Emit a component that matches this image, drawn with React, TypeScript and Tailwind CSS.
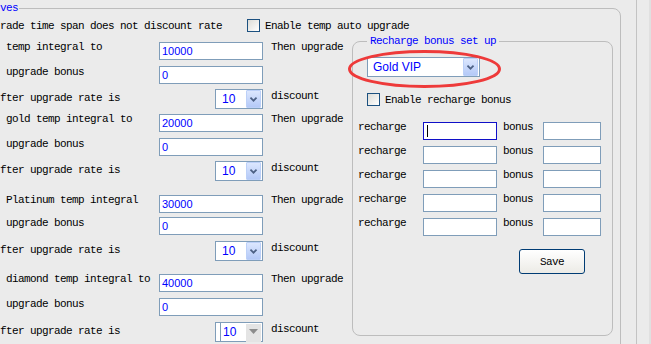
import React from 'react'

const txt =
  "font-['Liberation_Mono',monospace] text-[11px] leading-[12px] tracking-[-0.6px] text-black whitespace-pre"
const legendTxt =
  "font-['Liberation_Mono',monospace] text-[11px] tracking-[-0.6px] text-[#0000ff] whitespace-pre"

function Checkbox() {
  return (
    <div className="h-[13px] w-[13px] shrink-0 border border-[#1c5180] bg-linear-to-br from-[#dcdcd7] to-white" />
  )
}

function TextBox({
  value = '',
  className = '',
  focus = false,
}: {
  value?: string
  className?: string
  focus?: boolean
}) {
  return (
    <div
      className={`flex h-[18px] shrink-0 items-center bg-white pl-[2px] font-['Liberation_Sans',sans-serif] text-[11px] leading-[16px] text-[#0000ff] ${
        focus ? 'border border-[#1010c8]' : 'border border-[#7f9db9]'
      } ${className}`}
    >
      {focus && <span className="ml-[1px] h-[12px] w-[1px] bg-black" />}
      {value}
    </div>
  )
}

function Chevron() {
  return (
    <svg width="15" height="18" viewBox="0 0 15 18">
      <polyline
        points="4,7.5 7.5,11 11,7.5"
        fill="none"
        stroke="#4d6185"
        strokeWidth="2"
      />
    </svg>
  )
}

function Combo({ value, className = '', textClass = '' }: { value: string; className?: string; textClass?: string }) {
  return (
    <div
      className={`flex h-[20px] shrink-0 items-center justify-between border border-[#7f9db9] bg-white pr-[1px] font-['Liberation_Sans',sans-serif] text-[12px] text-[#0000ff] ${className}`}
    >
      <span className={textClass}>{value}</span>
      <div className="flex h-[18px] w-[15px] items-center justify-center rounded-[1px] border border-[#bcd0f8] bg-linear-to-b from-[#dce7fe] to-[#b4c9f7]">
        <Chevron />
      </div>
    </div>
  )
}

function DisabledCombo() {
  return (
    <div className="flex h-[20px] w-[48px] shrink-0 border border-[#7f9db9] bg-white pl-[4px] pr-[1px] font-['Liberation_Sans',sans-serif] text-[12px] text-[#0000ff]">
      <div className="flex flex-1 items-center border-l border-[#7f9db9] pl-[2px]">10</div>
      <div className="mt-[1px] flex h-[18px] w-[15px] items-start justify-center bg-[#e4e4e4] pt-[5px]">
        <svg width="9" height="6" viewBox="0 0 9 6">
          <polygon points="0,0 9,0 4.5,5" fill="#8c8c8c" />
        </svg>
      </div>
    </div>
  )
}

const groups = [
  { label: ' temp integral to', value: '10000', m: ['mt-[7px]', 'mt-[6px]', 'mt-[5px]'] },
  { label: ' gold temp integral to', value: '20000', m: ['mt-[5px]', 'mt-[6px]', 'mt-[5px]'] },
  { label: ' Platinum temp integral', value: '30000', m: ['mt-[14px]', 'mt-[4px]', 'mt-[6px]'] },
  { label: ' diamond temp integral to', value: '40000', m: ['mt-[13px]', 'mt-[6px]', 'mt-[6px]'] },
]

export default function App() {
  return (
    <div className="relative flex h-[344px] w-[651px] overflow-hidden bg-[#ebebeb]">
      <div className="h-full w-[636px] shrink-0">
        <fieldset className="ml-[-20px] h-[420px] w-[641px] min-w-0 rounded-tr-[8px] border border-[#bdbdbd] pl-[19px]">
          <legend className={`${legendTxt} pr-[1px] leading-[16px]`}>ves</legend>

          <div className="flex h-[19px] items-center">
            <span className={`${txt} w-[247px]`}>rade time span does not discount rate</span>
            <Checkbox />
            <span className={`${txt} ml-[5px]`}>Enable temp auto upgrade</span>
          </div>

          <div className="flex items-start">
            <div className="flex w-[352px] shrink-0 flex-col">
              {groups.map((g, i) => (
                <React.Fragment key={g.value}>
                  <div className={`flex h-[18px] ${g.m[0]}`}>
                    <span className={`${txt} mt-[-1px] w-[159px]`}>{g.label}</span>
                    <TextBox value={g.value} className="w-[104px]" />
                    <span className={`${txt} mt-[-1px] ml-[8px]`}>Then upgrade</span>
                  </div>
                  <div className={`flex h-[18px] ${g.m[1]}`}>
                    <span className={`${txt} w-[159px]`}> upgrade bonus</span>
                    <TextBox value="0" className="w-[104px]" />
                  </div>
                  <div className={`flex h-[20px] ${g.m[2]}`}>
                    <span className={`${txt} mt-[3px] w-[215px]`}>fter upgrade rate is</span>
                    {i === 3 ? (
                      <DisabledCombo />
                    ) : (
                      <Combo value="10" className="w-[48px]" textClass="pl-[6px]" />
                    )}
                    <span className={`${txt} mt-[1px] ml-[8px]`}>discount</span>
                  </div>
                </React.Fragment>
              ))}
            </div>

            <fieldset className="h-[301px] w-[261px] min-w-0 shrink-0 rounded-[8px] border border-[#bdbdbd]">
              <legend className={`${legendTxt} ml-[14px] px-[3px] leading-[12px]`}>Recharge bonus set up</legend>

              <Combo value="Gold VIP" className="ml-[14px] mt-[10px] w-[113px]" textClass="pl-[5px]" />

              <div className="ml-[14px] mt-[16px] flex h-[13px] items-center">
                <Checkbox />
                <span className={`${txt} ml-[5px]`}>Enable recharge bonus</span>
              </div>

              <div className="mt-[16px] flex flex-col gap-[6px] pl-[5px]">
                {[0, 1, 2, 3, 4].map((r) => (
                  <div key={r} className="flex h-[18px]">
                    <span className={`${txt} mt-[-1px] w-[65px]`}>recharge</span>
                    <TextBox className="w-[74px]" focus={r === 0} />
                    <span className={`${txt} mt-[-1px] ml-[6px] w-[40px]`}>bonus</span>
                    <TextBox className="w-[58px]" />
                  </div>
                ))}
              </div>

              <button className="ml-[166px] mt-[13px] flex h-[25px] w-[66px] items-center justify-center rounded-[3px] border border-[#003c74] bg-linear-to-b from-white to-[#ecebe6]">
                <span className={txt}>Save</span>
              </button>
            </fieldset>
          </div>
        </fieldset>
      </div>
      <div className="h-full w-[1px] shrink-0 bg-[#c3c3c3]" />
      <div className="h-full flex-1" />
      <div className="h-full w-[2px] shrink-0 bg-[#e0e0e0]" />

      <svg className="pointer-events-none absolute left-0 top-0" width="651" height="344">
        <ellipse cx="424.5" cy="69" rx="75" ry="17.5" fill="none" stroke="#ee3a3a" strokeWidth="3" />
      </svg>
    </div>
  )
}
